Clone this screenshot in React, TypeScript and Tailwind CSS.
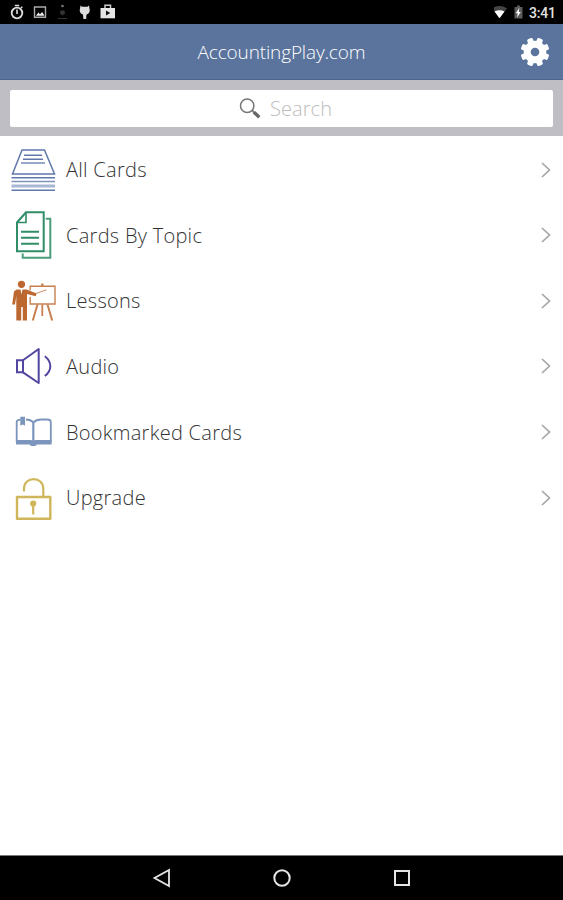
import type { ReactNode } from "react";

interface MenuItem {
  label: string;
  icon: ReactNode;
}

const iconClass = "h-[50px] w-[50px] shrink-0";

function CardsIcon() {
  return (
    <svg viewBox="0 0 50 50" className={iconClass} fill="none" stroke="#6078ac">
      <path d="M14 5h22.5L46.5 29h-42z" strokeWidth="1.5" />
      <path d="M16 10.3h18M15 14.3h20" strokeWidth="1.4" />
      <path d="M13 18h24" stroke="#8d9dc4" strokeWidth="1.8" />
      <path d="M3.5 32.7h43.5M3.5 45.3h43.5" strokeWidth="1.6" />
      <path d="M3.5 36.5h43.5" stroke="#7d93bb" strokeWidth="1.4" />
      <path d="M3.5 41h43.5" stroke="#a9b7d2" strokeWidth="3" />
    </svg>
  );
}

function TopicIcon() {
  return (
    <svg viewBox="0 0 50 50" className={iconClass} fill="none" stroke="#318c68">
      <path d="M18 2.3h17.7v39H9V12.5z" strokeWidth="2" />
      <path d="M18 2.5v10H9" strokeWidth="1.6" />
      <path d="M13 21.7h18M13 27.7h18M13 33.7h18" strokeWidth="2" />
      <path d="M37.7 8.8h4.6v39H14.7v-4.3" stroke="#4b9d7c" strokeWidth="2" />
    </svg>
  );
}

function LessonsIcon() {
  return (
    <svg viewBox="0 0 50 50" className={iconClass} fill="none" stroke="#c8804f">
      <circle cx="13.5" cy="8.3" r="3.6" fill="#bd6830" stroke="none" />
      <path
        d="M8.5 13.5h4l1 5 1-5h4.3l9.7 4-.8 2.7-8.7-2.2v26.5h-4.200V31h-1.600v13.500H8.300V20L7 28.500H4.200L6 15.500z"
        fill="#bd6830"
        stroke="none"
      />
      <path d="M21.5 10.3H47V28H22.2v-7M22.2 10.3v4" strokeWidth="1.4" />
      <path d="M28 17.5l10.5-3.700" strokeWidth=".9" />
      <path d="M34.3 7.5v2.500" strokeWidth="2.4" />
      <path d="M29.5 28.5l-4.700 16M39.500 28.500l4.700 16" strokeWidth="2" />
      <path d="M34.3 28.5V40" strokeWidth="1.8" />
    </svg>
  );
}

function AudioIcon() {
  return (
    <svg viewBox="0 0 50 50" className={iconClass} fill="none" stroke="#5247a0" strokeWidth="2">
      <path d="M9 19.3h6v12H9z" />
      <path d="M15 19.3L30.7 8v34L15 31.3" strokeLinejoin="round" />
      <path d="M36.8 15.3c7.300 5.500 7.300 14.200 0 19.700" />
    </svg>
  );
}

function BookmarkIcon() {
  return (
    <svg viewBox="0 0 50 50" className={iconClass} fill="none" stroke="#7c95bc">
      <path
        d="M25.3 15.5c-2-2.200-4-3-7.300-3M12.500 12.600c-2.500.2-3.800.8-3.800 2.400v20M25.300 15.500c2.500-2.500 4.500-3 8-3h6c2.500 0 3.500.8 3.500 2.500v20"
        strokeWidth="1.8"
      />
      <path d="M25.3 15v20.5" strokeWidth="2.2" />
      <path
        d="M8 33h13.500c2 0 3 .5 3.800 1.200.8-.7 1.800-1.200 3.800-1.200h14.500v4.600H29c-1 2-6.500 2-7.500 0H8z"
        fill="#7c95bc"
        stroke="none"
      />
      <path d="M12.3 9.7h4.700v9l-2.300-1.300-2.400 1.300z" fill="#7c95bc" stroke="none" />
    </svg>
  );
}

function UpgradeIcon() {
  return (
    <svg viewBox="0 0 50 50" className={iconClass} fill="none" stroke="#d0b65a">
      <path d="M9 24h33.3v21.700H9z" strokeWidth="2.4" strokeLinejoin="round" />
      <path d="M16 18.5v-3c0-12.500 19.300-12.500 19.300 0V24" strokeWidth="2.2" />
      <circle cx="25.2" cy="30.5" r="3.1" fill="#d0b65a" stroke="none" />
      <path d="M25.2 31v10.5" strokeWidth="2.2" />
    </svg>
  );
}

const items: MenuItem[] = [
  { label: "All Cards", icon: <CardsIcon /> },
  { label: "Cards By Topic", icon: <TopicIcon /> },
  { label: "Lessons", icon: <LessonsIcon /> },
  { label: "Audio", icon: <AudioIcon /> },
  { label: "Bookmarked Cards", icon: <BookmarkIcon /> },
  { label: "Upgrade", icon: <UpgradeIcon /> },
];

function StatusBar() {
  return (
    <div className="flex h-6 shrink-0 items-center justify-between bg-black px-2">
      <svg viewBox="0 0 120 24" className="h-6 w-[120px]" fill="none">
        {/* Timer */}
        <circle cx="9" cy="13" r="5.3" stroke="#ddd" strokeWidth="1.8" />
        <path d="M6.8 5.5h4.4M9 9.5V14M13 8l1.300-1.300" stroke="#ddd" strokeWidth="1.6" />
        {/* Picture */}
        <path d="M26.5 7h11v10.300h-11z" stroke="#aaa" strokeWidth="1.4" />
        <path d="M28 15.8l2.300-3.300 1.700 1.800 2.200-2.300 2.300 3.800z" fill="#eee" />
        {/* Download */}
        <circle cx="54.5" cy="6" r="1.3" fill="#777" />
        <path d="M52.5 10.5h4l.5 3-2.500 2-2.500-2z" fill="#333" />
        <path d="M50 18.5h9" stroke="#333" />
        {/* Android head */}
        <path d="M72.5 5.5l1.5 1.300h5.500L81 5.500l.5 3.200c.9 2.800-.8 5.300-3 5.800l-.4 4.500h-2.700l-.4-4.500c-2.200-.5-3.900-3-3-5.800z" fill="#ddd" />
        {/* Store bag */}
        <path d="M97 8.5V5.3h5.500v3.200" stroke="#ccc" strokeWidth="1.5" />
        <path d="M92.5 8H107v10.300H92.500z" fill="#e6e6e6" />
        <path d="M98 10.5l4.300 2.500-4.300 2.500z" fill="#111" />
      </svg>
      <div className="flex items-center">
        <svg viewBox="0 0 36 24" className="mr-[-1px] h-6 w-9" fill="none">
          <path d="M-2 8.5c4.400-3.300 10.700-3.300 15 0L5.500 18z" fill="#444" />
          <path d="M.5 11.5c3.400-1.700 6.700-1.700 10 0l-5 6.800z" fill="#fff" />
          <path d="M20.500 7H23V5.500h3V7h2.500v11.500h-8z" fill="#5c5c5c" />
          <path d="M25.300 7.800l-3.500 5.400h2l-.8 4.300 3.800-5.500h-2z" fill="#fff" />
        </svg>
        <span className="w-[26px] whitespace-nowrap pt-[2px] font-['Roboto'] text-[14px] font-medium leading-[22px] tracking-[-0.2px] text-[#e2e2e2]">
          3:41
        </span>
      </div>
    </div>
  );
}

const gearTeeth = [22.5, 67.5, 112.5, 157.5];

function GearIcon() {
  return (
    <svg viewBox="-15 -15 30 30" className="h-[30px] w-[30px]">
      <g fill="#fff">
        {gearTeeth.map((angle) => (
          <rect
            key={angle}
            x="-3"
            y="-14.4"
            width="6"
            height="28.8"
            rx="1.5"
            transform={`rotate(${angle})`}
          />
        ))}
        <circle r="11.3" />
      </g>
      <circle r="4.3" fill="#5a749d" />
    </svg>
  );
}

export default function App() {
  return (
    <div className="flex h-[900px] w-[563px] flex-col overflow-hidden bg-white font-['Open_Sans',sans-serif] font-light">
      <StatusBar />

      {/* Header */}
      <header className="grid h-14 shrink-0 grid-cols-[1fr_auto_1fr] items-center border-b border-[#4f648d] bg-[#5a749d] px-[13px]">
        <h1 className="col-start-2 pt-px text-[19px] leading-7 tracking-[-0.15px] text-white">AccountingPlay.com</h1>
        <button className="justify-self-end" aria-label="Settings">
          <GearIcon />
        </button>
      </header>

      {/* Search */}
      <div className="h-14 shrink-0 bg-[#bfbec4] px-[10px] pt-[10px]">
        <div className="flex h-[37px] items-center justify-center gap-2 rounded-[2px] bg-white pl-[7px]">
          <svg viewBox="0 0 24 24" className="h-6 w-6" fill="none" stroke="#777">
            <circle cx="9.2" cy="8.8" r="6.7" strokeWidth="1.5" />
            <path d="M14.2 13.5l2.300 2.300" strokeWidth="1.8" />
            <path d="M16 15.300l5.300 4.900" stroke="#666" strokeWidth="3.3" />
          </svg>
          <span className="text-[20px] leading-7 tracking-[0.1px] text-[#bdbdbd]">Search</span>
        </div>
      </div>

      {/* Menu */}
      <ul className="flex-1 pt-[0.9px]">
        {items.map((item) => (
          <li key={item.label} className="flex h-[65.6px] items-center pl-2 pr-3">
            {item.icon}
            <span className="ml-2 flex-1 pt-px text-[20px] leading-7 tracking-[0.28px] text-[#333]">{item.label}</span>
            <svg viewBox="0 0 10 16" className="h-4 w-[10px]" fill="none" stroke="#a6a6a6" strokeWidth="1.7">
              <path d="M1 1l7.5 7L1 15" />
            </svg>
          </li>
        ))}
      </ul>

      {/* Navigation bar */}
      <nav className="flex h-[45px] shrink-0 items-center justify-center gap-[100px] border-t border-[#777] bg-black">
        <svg viewBox="0 0 20 20" className="h-5 w-5" fill="none" stroke="#e5e5e5" strokeWidth="1.8">
          <path d="M17 2v16L2.5 10z" />
        </svg>
        <svg viewBox="0 0 20 20" className="h-5 w-5" fill="none" stroke="#e5e5e5" strokeWidth="2">
          <circle cx="10" cy="10" r="7.7" />
        </svg>
        <svg viewBox="0 0 20 20" className="h-5 w-5" fill="none" stroke="#e5e5e5" strokeWidth="2">
          <path d="M3 3h14v14H3z" />
        </svg>
      </nav>
    </div>
  );
}
